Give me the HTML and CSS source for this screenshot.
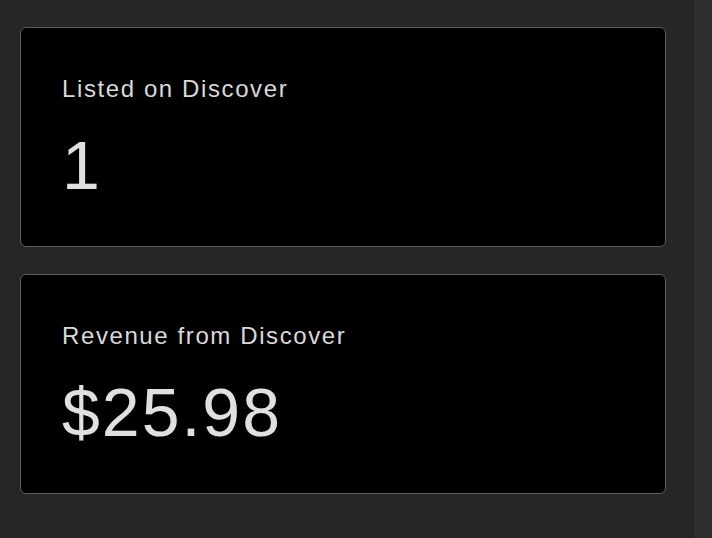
FILE: index.html
```html
<!DOCTYPE html>
<html>
<head>
<meta charset="utf-8">
<link rel="stylesheet" href="styles.css">
</head>
<body>
<div class="page">
  <main class="main">
    <section class="card">
      <div class="label">Listed on Discover</div>
      <div class="value">1</div>
    </section>
    <section class="card">
      <div class="label">Revenue from Discover</div>
      <div class="value">$25.98</div>
    </section>
  </main>
  <div class="scrollbar"></div>
</div>
</body>
</html>
```
FILE: styles.css
```css
html, body {
  margin: 0;
  padding: 0;
  height: 100%;
  background: #262624;
}
.page {
  display: flex;
  height: 538px;
  overflow: hidden;
}
.main {
  flex: 0 0 693px;
  box-sizing: border-box;
  padding: 27px 27px 0 20px;
  display: flex;
  flex-direction: column;
  gap: 27px;
}
.scrollbar {
  flex: 1;
  background: #2e2e2d;
  border-left: 1px solid #232322;
}
.card {
  box-sizing: border-box;
  height: 220px;
  background: #000;
  border: 1px solid #5c5c5c;
  border-radius: 6px;
  padding: 47px 41px 0 41px;
  color: #dedede;
  font-family: "Liberation Sans", Arial, sans-serif;
}
.label {
  font-size: 24px;
  line-height: 28px;
  letter-spacing: 1.6px;
  color: #d9d9d9;
}
.value {
  margin-top: 23px;
  font-size: 68px;
  line-height: 78px;
  letter-spacing: 2px;
  color: #e0e0e0;
}
```
